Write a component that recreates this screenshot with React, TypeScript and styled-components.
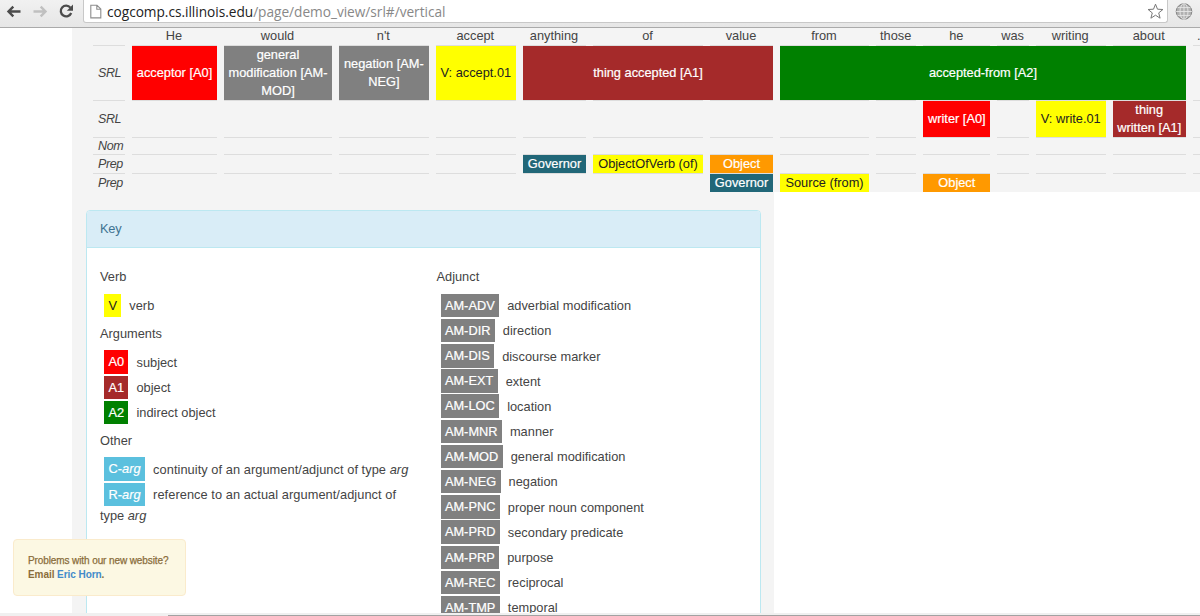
import React from 'react';
import styled, { createGlobalStyle } from 'styled-components';

const GlobalStyle = createGlobalStyle`
  *, *::before, *::after { box-sizing: border-box; }
  body {
    margin: 0;
    background: #fff;
    color: #444;
    font: 12.8px/18px "Liberation Sans", Arial, sans-serif;
    overflow: hidden;
  }
`;

const Window = styled.div`
  width: 1200px;
  height: 616px;
  display: flex;
  flex-direction: column;
  overflow: hidden;
  position: relative;
`;

const Toolbar = styled.header`
  height: 28px;
  flex: none;
  display: flex;
  align-items: flex-start;
  background: linear-gradient(#f1f1f1, #e6e6e6);
  border-bottom: 1px solid #aaa;
`;

const NavIcons = styled.div`
  width: 83px;
  height: 24px;
  flex: none;
`;

const AddressBar = styled.div`
  width: 1085px;
  height: 23px;
  flex: none;
  display: flex;
  align-items: center;
  padding: 0 3px 0 6px;
  background: #fff;
  border: 1px solid #c8c8c8;
  border-top: 0;
  border-radius: 0 0 3px 3px;
`;

const Url = styled.span`
  flex: 1;
  margin-left: 5px;
  padding-top: 1px;
  color: #888;
  font: 13.7px/20px "Open Sans", "Noto Sans", sans-serif;
  letter-spacing: -0.03px;
  white-space: pre;
`;

const Host = styled.span`
  color: #222;
`;

const GlobeButton = styled.div`
  margin: 3px 0 0 7px;
  width: 18px;
  height: 18px;
`;

const Viewport = styled.main`
  height: 585px;
  flex: none;
  padding-left: 72px;
  overflow: hidden;
`;

const Content = styled.section`
  width: 702px;
  height: 585px;
  background: #f4f4f4;
`;

const TokenGrid = styled.div`
  width: 1128px;
  height: 164px;
  padding-left: 21px;
  background: #f4f4f4;
  display: grid;
  grid-template-columns: 32px 85px 108px 89.7px 80.3px 63px 110px 63px 89px 40.4px 66.9px 31.7px 69.6px 73.4px 40px;
  grid-template-rows: 17px 55px 37px 17px 19px 19px;
  column-gap: 7px;
  overflow: hidden;
`;

const Token = styled.div<{ $col: number }>`
  grid-row: 1;
  grid-column: ${(p) => p.$col};
  text-align: center;
  line-height: 16px;
  margin-left: -1px;
`;

const Period = styled(Token)`
  text-align: left;
  padding-left: 5px;
`;

const Slot = styled.div<{ $row: number; $col: number }>`
  grid-row: ${(p) => p.$row};
  grid-column: ${(p) => p.$col};
  border-top: 1px solid #ddd;
`;

const ViewName = styled(Slot)`
  display: flex;
  align-items: center;
  padding-left: 5px;
  font-size: 12.5px;
  font-style: italic;
  letter-spacing: -0.4px;
`;

const Role = styled.div<{ $row: number; $col: number; $span: number; $tone: Tone }>`
  grid-row: ${(p) => p.$row};
  grid-column: ${(p) => p.$col} / span ${(p) => p.$span};
  margin-top: 1px;
  display: flex;
  align-items: center;
  justify-content: center;
  text-align: center;
  white-space: pre;
  background: ${(p) => tones[p.$tone]};
  color: ${(p) => (p.$tone === 'verb' ? '#222' : '#fff')};
  -webkit-text-stroke: ${(p) => (p.$tone === 'verb' ? '0' : '0.2px #fff')};
`;

const Panel = styled.section`
  width: 675px;
  height: 440px;
  margin: 18px 0 0 14px;
  background: #fff;
  border: 1px solid #bce8f1;
  border-radius: 4px 4px 0 0;
`;

const PanelHeader = styled.h3`
  height: 37px;
  margin: 0;
  padding: 0 13px;
  font-size: 12.8px;
  font-weight: 400;
  line-height: 36px;
  letter-spacing: -0.2px;
  color: #3f7391;
  background: #d9edf7;
  border-bottom: 1px solid #bce8f1;
  border-radius: 3px 3px 0 0;
`;

const PanelBody = styled.div`
  display: grid;
  grid-template-columns: 336.5px 1fr;
  padding: 13.7px 0 0 13px;
`;

const KeyColumn = styled.div``;

const GroupTitle = styled.h4`
  margin: 6.3px 0 7.2px;
  font-size: 12.8px;
  font-weight: 400;
  line-height: 18px;
`;

const Entry = styled.div<{ $loose?: boolean }>`
  height: 25.2px;
  line-height: 25.2px;
  padding-left: 4px;
  white-space: nowrap;
  letter-spacing: ${(p) => (p.$loose ? '0.06px' : '0.01px')};
`;

const Badge = styled.span<{ $tone: Tone }>`
  display: inline-block;
  height: 23.5px;
  line-height: 24px;
  padding: 0 4.4px;
  margin-right: 8px;
  vertical-align: top;
  margin-top: 0.5px;
  background: ${(p) => tones[p.$tone]};
  color: ${(p) => (p.$tone === 'verb' ? '#222' : '#fff')};
  -webkit-text-stroke: ${(p) => (p.$tone === 'verb' ? '0' : '0.2px #fff')};
`;

const Wrapped = styled.div`
  line-height: 18px;
`;

const Notice = styled.aside`
  position: absolute;
  left: 13px;
  top: 539px;
  width: 173px;
  height: 57px;
  padding: 14px 14px;
  border: 1px solid #faebcc;
  border-radius: 4px;
  background: #fcf8e3;
  color: #8a6d3b;
  font-size: 10px;
  font-weight: 700;
  line-height: 13.6px;
  letter-spacing: -0.06px;
  white-space: nowrap;
`;

const Question = styled.div`
  font-weight: 400;
  letter-spacing: -0.1px;
  -webkit-text-stroke: 0.25px #8a6d3b;
`;

const MailLink = styled.a`
  color: #428bca;
`;

const ScrollTrack = styled.footer`
  flex: 1;
  padding: 2px 0 0 168px;
  background: #f0f0f0;
`;

const ScrollThumb = styled.div`
  height: 1px;
  background: #a2a2a2;
`;

const tones = {
  verb: '#ffff00',
  a0: '#ff0000',
  a1: '#a52a2a',
  a2: '#008000',
  adjunct: '#808080',
  governor: '#216778',
  object: '#ff9900',
  other: '#5bc0de',
};
type Tone = keyof typeof tones;

const tokens = ['He', 'would', "n't", 'accept', 'anything', 'of', 'value', 'from', 'those', 'he', 'was', 'writing', 'about'];
const views = ['SRL', 'SRL', 'Nom', 'Prep', 'Prep'];

const roles: { row: number; col: number; span?: number; tone: Tone; text: string }[] = [
  { row: 2, col: 2, tone: 'a0', text: 'acceptor [A0]' },
  { row: 2, col: 3, tone: 'adjunct', text: 'general\nmodification [AM-\nMOD]' },
  { row: 2, col: 4, tone: 'adjunct', text: 'negation [AM-\nNEG]' },
  { row: 2, col: 5, tone: 'verb', text: 'V: accept.01' },
  { row: 2, col: 6, span: 3, tone: 'a1', text: 'thing accepted [A1]' },
  { row: 2, col: 9, span: 6, tone: 'a2', text: 'accepted-from [A2]' },
  { row: 3, col: 11, tone: 'a0', text: 'writer [A0]' },
  { row: 3, col: 13, tone: 'verb', text: 'V: write.01' },
  { row: 3, col: 14, tone: 'a1', text: 'thing\nwritten [A1]' },
  { row: 5, col: 6, tone: 'governor', text: 'Governor' },
  { row: 5, col: 7, tone: 'verb', text: 'ObjectOfVerb (of)' },
  { row: 5, col: 8, tone: 'object', text: 'Object' },
  { row: 6, col: 8, tone: 'governor', text: 'Governor' },
  { row: 6, col: 9, tone: 'verb', text: 'Source (from)' },
  { row: 6, col: 11, tone: 'object', text: 'Object' },
];

const adjuncts = [
  ['AM-ADV', 'adverbial modification'],
  ['AM-DIR', 'direction'],
  ['AM-DIS', 'discourse marker'],
  ['AM-EXT', 'extent'],
  ['AM-LOC', 'location'],
  ['AM-MNR', 'manner'],
  ['AM-MOD', 'general modification'],
  ['AM-NEG', 'negation'],
  ['AM-PNC', 'proper noun component'],
  ['AM-PRD', 'secondary predicate'],
  ['AM-PRP', 'purpose'],
  ['AM-REC', 'reciprocal'],
  ['AM-TMP', 'temporal'],
];

function BrowserBar() {
  return (
    <Toolbar>
      <NavIcons>
        <svg width="83" height="24" fill="none">
          <path d="M20.5 11.5H9M13.3 6.7 8.5 11.5l4.8 4.8" stroke="#4c4c4c" strokeWidth="2.4" />
          <path d="M33.5 11.5H45M40.7 6.7l4.8 4.8-4.8 4.8" stroke="#c0c0c0" strokeWidth="2.4" />
          <path d="M70.4 7.6A5.4 5.4 0 1 0 71.2 13" stroke="#4c4c4c" strokeWidth="2.3" />
          <path d="M73 4.6v6.2h-6.2z" fill="#4c4c4c" />
        </svg>
      </NavIcons>
      <AddressBar>
        <svg width="12" height="15" fill="none" stroke="#8d8d8d">
          <path d="M.8 1.2h6.2L10.8 5v8.9H.8zM6.8 1.2v4h4" strokeWidth="1.1" />
        </svg>
        <Url>
          <Host>cogcomp.cs.illinois.edu</Host>/page/demo_view/srl#/vertical
        </Url>
        <svg width="17" height="17" viewBox="0 0 17 17" fill="#fff" stroke="#777" strokeLinejoin="round">
          <path d="m8.5 1.2 2 5 5.4.3-4.2 3.4 1.4 5.3-4.6-3-4.6 3 1.4-5.3L1.1 6.5l5.4-.3z" />
        </svg>
      </AddressBar>
      <GlobeButton>
        <svg width="18" height="18" viewBox="0 0 18 18" fill="#b0b0b0" stroke="#858585">
          <circle cx="9" cy="8.5" r="7.8" />
          <path d="M9 .7v15.6M1.2 8.5h15.6M2.5 4.6h13M2.5 12.4h13" fill="none" stroke="#e8e8e8" strokeWidth=".9" />
          <ellipse cx="9" cy="8.5" rx="4" ry="7.8" fill="none" stroke="#e8e8e8" strokeWidth=".9" />
        </svg>
      </GlobeButton>
    </Toolbar>
  );
}

function Annotations() {
  return (
    <TokenGrid>
      {tokens.map((t, i) => (
        <Token key={t} $col={i + 2}>{t}</Token>
      ))}
      <Period $col={15}>.</Period>
      {views.map((name, r) => (
        <React.Fragment key={r}>
          <ViewName $row={r + 2} $col={1}>{name}</ViewName>
          {Array.from({ length: 14 }, (_, c) => (
            <Slot key={c} $row={r + 2} $col={c + 2} />
          ))}
        </React.Fragment>
      ))}
      {roles.map((r, i) => (
        <Role key={i} $row={r.row} $col={r.col} $span={r.span ?? 1} $tone={r.tone}>{r.text}</Role>
      ))}
    </TokenGrid>
  );
}

export default function App() {
  return (
    <Window>
      <GlobalStyle />
      <BrowserBar />
      <Viewport>
        <Content>
          <Annotations />
          <Panel>
            <PanelHeader>Key</PanelHeader>
            <PanelBody>
              <KeyColumn>
                <GroupTitle>Verb</GroupTitle>
                <Entry><Badge $tone="verb">V</Badge>verb</Entry>
                <GroupTitle>Arguments</GroupTitle>
                <Entry><Badge $tone="a0">A0</Badge>subject</Entry>
                <Entry><Badge $tone="a1">A1</Badge>object</Entry>
                <Entry><Badge $tone="a2">A2</Badge>indirect object</Entry>
                <GroupTitle>Other</GroupTitle>
                <Entry $loose><Badge $tone="other">C-<em>arg</em></Badge>continuity of an argument/adjunct of type <em>arg</em></Entry>
                <Entry $loose><Badge $tone="other">R-<em>arg</em></Badge>reference to an actual argument/adjunct of</Entry>
                <Wrapped>type <em>arg</em></Wrapped>
              </KeyColumn>
              <KeyColumn>
                <GroupTitle>Adjunct</GroupTitle>
                {adjuncts.map(([code, meaning]) => (
                  <Entry key={code}><Badge $tone="adjunct">{code}</Badge>{meaning}</Entry>
                ))}
              </KeyColumn>
            </PanelBody>
          </Panel>
        </Content>
      </Viewport>
      <ScrollTrack><ScrollThumb /></ScrollTrack>
      <Notice>
        <Question>Problems with our new website?</Question>
        <div>Email <MailLink>Eric Horn</MailLink>.</div>
      </Notice>
    </Window>
  );
}
